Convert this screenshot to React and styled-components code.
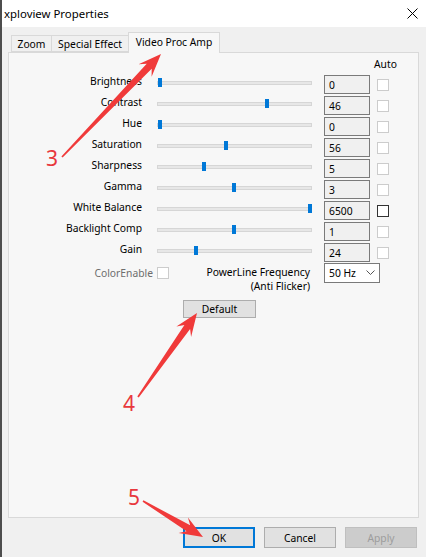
import styled, { createGlobalStyle } from 'styled-components';

const GlobalStyle = createGlobalStyle`
  html, body { margin: 0; padding: 0; background: #f0f0f0; }
  * { box-sizing: border-box; }
`;

const Window = styled.div`
  position: relative;
  width: 426px;
  height: 557px;
  display: flex;
  flex-direction: column;
  background: #f0f0f0;
  border-left: 2px solid #4d4d4d;
  font-family: "Noto Sans", "Open Sans", sans-serif;
  font-size: 10.3px;
  color: #000;
  overflow: hidden;
`;

const TitleBar = styled.div`
  height: 27px;
  flex: none;
  background: #fff;
  display: flex;
  align-items: center;
  justify-content: space-between;
  padding: 0 8px 0 2px;
  font-size: 11.4px;
`;

const Body = styled.div`
  padding: 5px 7px 0 6px;
  display: flex;
  flex-direction: column;
`;

const TabRow = styled.div`
  display: flex;
  align-items: flex-end;
  height: 20px;
  padding-left: 4px;
`;

const Tab = styled.div`
  width: ${p => p.$w}px;
  height: ${p => (p.$active ? 21 : 17)}px;
  margin-left: -1px;
  margin-bottom: ${p => (p.$active ? -1 : 0)}px;
  display: flex;
  align-items: center;
  justify-content: center;
  padding-bottom: ${p => (p.$active ? 2 : 0)}px;
  border: 1px solid #d9d9d9;
  border-bottom: ${p => (p.$active ? 'none' : '1px solid #d9d9d9')};
  background: ${p => (p.$active ? '#f7f7f7' : '#f0f0f0')};
  position: relative;
  z-index: ${p => (p.$active ? 2 : 1)};
`;

const Panel = styled.div`
  height: 466px;
  border: 1px solid #d9d9d9;
  background: #f7f7f7;
  padding-top: 4px;
  display: flex;
  flex-direction: column;
`;

const AutoHeader = styled.div`
  height: 17px;
  padding-left: 365px;
  line-height: 14px;
`;

const Row = styled.div`
  display: flex;
  align-items: center;
  height: 21px;
`;

const Label = styled.div`
  width: 133px;
  text-align: right;
  line-height: 14px;
  margin-bottom: 7px;
  white-space: nowrap;
`;

const Track = styled.div`
  position: relative;
  margin-left: 15px;
  width: 155px;
  height: 4px;
  background: #e7e7e7;
  border: 1px solid #d6d6d6;
  margin-bottom: 3px;
`;

const Thumb = styled.div`
  position: absolute;
  top: -4px;
  width: 4px;
  height: 9px;
  background: #0078d7;
`;

const ValueBox = styled.div`
  margin-left: 12px;
  width: 46px;
  height: 19px;
  border: 1px solid #7a7a7a;
  background: #f0f0f0;
  padding-left: 4px;
  display: flex;
  align-items: center;
`;

const Check = styled.div`
  margin-left: ${p => p.$ml ?? 7}px;
  margin-top: ${p => p.$mt ?? 0}px;
  width: 12px;
  height: 12px;
  flex: none;
  border: 1px solid ${p => (p.$enabled ? '#333' : '#cccccc')};
  background: #fff;
`;

const BottomRow = styled.div`
  display: flex;
  align-items: flex-start;
  height: 28px;
`;

const ColorLabel = styled.div`
  width: 144px;
  text-align: right;
  line-height: 20px;
  color: #6d6d6d;
`;

const PowerLabel = styled.div`
  width: 141px;
  text-align: right;
  line-height: 14px;
  margin-top: 2px;
  white-space: nowrap;
`;

const Select = styled.div`
  margin-left: 14px;
  width: 56px;
  height: 20px;
  border: 1px solid #7a7a7a;
  background: #fff;
  display: flex;
  align-items: center;
  justify-content: space-between;
  padding: 0 4px 0 4px;
`;

const Button = styled.div`
  width: ${p => p.$w ?? 72}px;
  height: ${p => p.$h ?? 21}px;
  display: flex;
  align-items: center;
  justify-content: center;
  background: ${p => (p.$disabled ? '#cccccc' : '#e1e1e1')};
  color: ${p => (p.$disabled ? '#9c9c9c' : '#000')};
  border: ${p => (p.$focus ? '2px solid #0078d7' : p.$disabled ? '1px solid #bfbfbf' : '1px solid #adadad')};
`;

const DefaultWrap = styled.div`
  padding: 9px 0 0 174px;
`;

const Footer = styled.div`
  display: flex;
  justify-content: flex-end;
  gap: 9px;
  padding: 9px 2px 0 0;
`;

const Overlay = styled.svg`
  position: absolute;
  left: -2px;
  top: 0;
  pointer-events: none;
`;

const Num = styled.span`
  position: absolute;
  left: ${p => p.$x}px;
  top: ${p => p.$y}px;
  font-family: "Noto Sans", sans-serif;
  font-size: 21px;
  line-height: 1;
  color: #e8383d;
`;

const rows = [
  { name: 'Brightness', v: '0', p: 0 },
  { name: 'Contrast', v: '46', p: 0.71 },
  { name: 'Hue', v: '0', p: 0 },
  { name: 'Saturation', v: '56', p: 0.44 },
  { name: 'Sharpness', v: '5', p: 0.29 },
  { name: 'Gamma', v: '3', p: 0.49 },
  { name: 'White Balance', v: '6500', p: 1, auto: true },
  { name: 'Backlight Comp', v: '1', p: 0.49 },
  { name: 'Gain', v: '24', p: 0.24 },
];

function arrow(x1, y1, x2, y2) {
  const dx = x2 - x1, dy = y2 - y1;
  const len = Math.hypot(dx, dy);
  const ux = dx / len, uy = dy / len;
  const nx = -uy, ny = ux;
  const at = (d, w) => [x2 - ux * d + nx * w, y2 - uy * d + ny * w];
  const pts = [
    at(len, 0.8), at(17, 3.5), at(23, 9), [x2, y2], at(23, -9), at(17, -3.5), at(len, -0.8),
  ];
  return pts.map(p => p.map(n => n.toFixed(1)).join(',')).join(' ');
}

export default function App() {
  return (
    <Window>
      <GlobalStyle />
      <TitleBar>
        <span>xploview Properties</span>
        <svg width="11" height="11" viewBox="0 0 11 11">
          <path d="M0.5 0.5 L10.5 10.5 M10.5 0.5 L0.5 10.5" stroke="#000" strokeWidth="1" />
        </svg>
      </TitleBar>
      <Body>
        <TabRow>
          <Tab $w={41}>Zoom</Tab>
          <Tab $w={78}>Special Effect</Tab>
          <Tab $w={92} $active>Video Proc Amp</Tab>
        </TabRow>
        <Panel>
          <AutoHeader>Auto</AutoHeader>
          {rows.map(r => (
            <Row key={r.name}>
              <Label>{r.name}</Label>
              <Track>
                <Thumb style={{ left: `${r.p * 150}px` }} />
              </Track>
              <ValueBox>{r.v}</ValueBox>
              <Check $enabled={r.auto} />
            </Row>
          ))}
          <BottomRow>
            <ColorLabel>ColorEnable</ColorLabel>
            <Check $ml={4} $mt={4} />
            <PowerLabel>
              PowerLine Frequency
              <br />
              (Anti Flicker)
            </PowerLabel>
            <Select>
              <span>50 Hz</span>
              <svg width="9" height="6" viewBox="0 0 9 6">
                <path d="M0.5 0.5 L4.5 4.5 L8.5 0.5" fill="none" stroke="#555" strokeWidth="1" />
              </svg>
            </Select>
          </BottomRow>
          <DefaultWrap>
            <Button $w={73} $h={18}>Default</Button>
          </DefaultWrap>
        </Panel>
        <Footer>
          <Button $focus>OK</Button>
          <Button>Cancel</Button>
          <Button $disabled>Apply</Button>
        </Footer>
      </Body>
      <Overlay width="426" height="557" viewBox="0 0 426 557">
        <polygon points={arrow(62, 157, 161, 54)} fill="#f03a3a" />
        <polygon points={arrow(138, 397, 197, 313)} fill="#f03a3a" />
        <polygon points={arrow(143, 501, 203, 537)} fill="#f03a3a" />
      </Overlay>
      <Num $x={44} $y={148}>3</Num>
      <Num $x={121} $y={393}>4</Num>
      <Num $x={126} $y={487}>5</Num>
    </Window>
  );
}
